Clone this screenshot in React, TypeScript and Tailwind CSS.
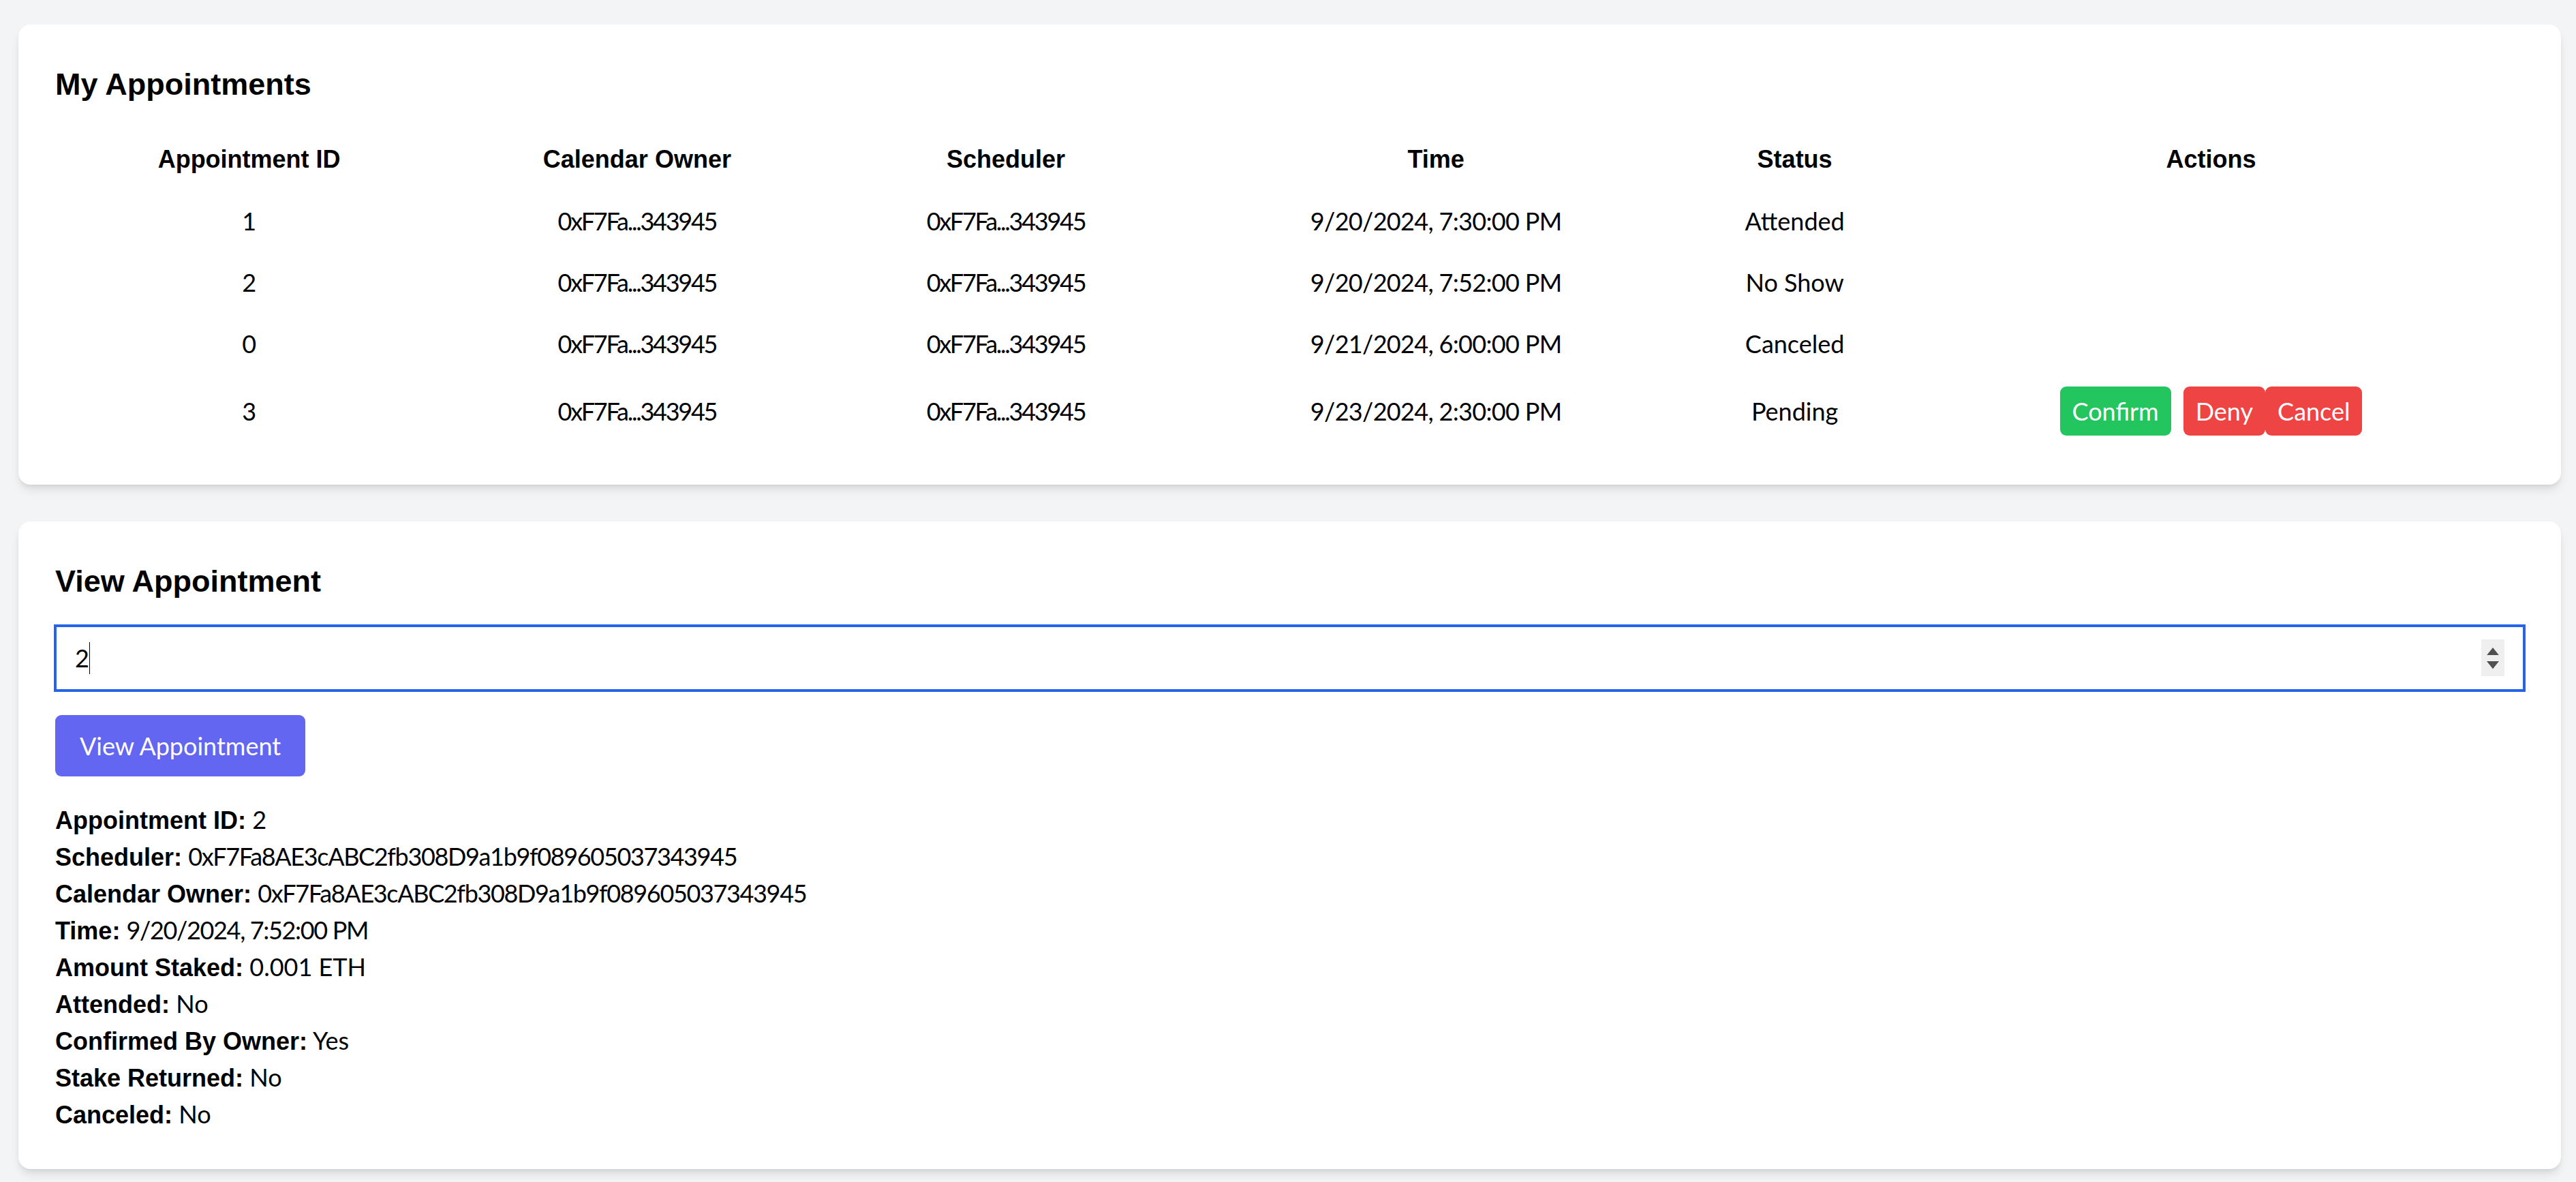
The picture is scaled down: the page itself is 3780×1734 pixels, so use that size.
const appointments = [
  { id: 1, owner: '0xF7Fa...343945', scheduler: '0xF7Fa...343945', time: '9/20/2024, 7:30:00 PM', status: 'Attended' },
  { id: 2, owner: '0xF7Fa...343945', scheduler: '0xF7Fa...343945', time: '9/20/2024, 7:52:00 PM', status: 'No Show' },
  { id: 0, owner: '0xF7Fa...343945', scheduler: '0xF7Fa...343945', time: '9/21/2024, 6:00:00 PM', status: 'Canceled' },
  { id: 3, owner: '0xF7Fa...343945', scheduler: '0xF7Fa...343945', time: '9/23/2024, 2:30:00 PM', status: 'Pending' },
]

const details = [
  ['Appointment ID', '2'],
  ['Scheduler', '0xF7Fa8AE3cABC2fb308D9a1b9f089605037343945'],
  ['Calendar Owner', '0xF7Fa8AE3cABC2fb308D9a1b9f089605037343945'],
  ['Time', '9/20/2024, 7:52:00 PM'],
  ['Amount Staked', '0.001 ETH'],
  ['Attended', 'No'],
  ['Confirmed By Owner', 'Yes'],
  ['Stake Returned', 'No'],
  ['Canceled', 'No'],
]

// bold text uses Arial metrics, regular text Lato
const bold = "font-bold font-['Liberation_Sans',Arial,sans-serif]"

function MyAppointments() {
  return (
    <div className="bg-white rounded-lg shadow-md p-6 mb-6">
      <h2 className={`text-xl mb-[15px] pt-px ${bold}`}>My Appointments</h2>
      <table className="w-full table-fixed text-center">
        <colgroup>
          <col className="w-[253px]" />
          <col className="w-[253px]" />
          <col className="w-[228px]" />
          <col className="w-[333px]" />
          <col className="w-[135px]" />
          <col />
        </colgroup>
        <thead>
          <tr>
            <th className={`py-2 ${bold}`}>Appointment ID</th>
            <th className={`py-2 ${bold}`}>Calendar Owner</th>
            <th className={`py-2 ${bold}`}>Scheduler</th>
            <th className={`py-2 ${bold}`}>Time</th>
            <th className={`py-2 ${bold}`}>Status</th>
            <th className={`py-2 ${bold}`}>Actions</th>
          </tr>
        </thead>
        <tbody>
          {appointments.map((a) => (
            <tr key={a.id}>
              <td className="py-2">{a.id}</td>
              <td className="py-2 tracking-[-1px]">{a.owner}</td>
              <td className="py-2 tracking-[-1px]">{a.scheduler}</td>
              <td className="py-2 tracking-[-0.3px]">{a.time}</td>
              <td className="py-2">{a.status}</td>
              <td className="py-2">
                {a.status === 'Pending' && (
                  <div className="flex justify-center">
                    <button className="bg-[#22c55e] text-white px-2 py-1 rounded mr-2">Confirm</button>
                    <button className="bg-[#ef4444] text-white px-2 py-1 rounded">Deny</button>
                    <button className="bg-[#ef4444] text-white px-2 py-1 rounded">Cancel</button>
                  </div>
                )}
              </td>
            </tr>
          ))}
        </tbody>
      </table>
    </div>
  )
}

function ViewAppointment() {
  return (
    <div className="bg-white rounded-lg shadow-md p-6">
      <h2 className={`text-xl mb-[15px] pt-px ${bold}`}>View Appointment</h2>
      <div className="flex items-center h-[42px] border border-[#2563eb] outline outline-[#2563eb] pl-3 pr-3">
        <span>2</span>
        <span className="w-[0.5px] h-[21px] bg-black" />
        <div className="ml-auto w-[15px] h-6 bg-[#efefef] flex flex-col items-center justify-center gap-[4px]">
          <svg width="8" height="5" viewBox="0 0 8 5">
            <path d="M0 5 L4 0 L8 5 Z" fill="#505050" />
          </svg>
          <svg width="8" height="5" viewBox="0 0 8 5">
            <path d="M0 0 L4 5 L8 0 Z" fill="#505050" />
          </svg>
        </div>
      </div>
      <button className="mt-4 bg-[#6366f1] text-white px-4 py-2 rounded">View Appointment</button>
      <div className="mt-4">
        {details.map(([label, value]) => (
          <p key={label} className="h-6 whitespace-nowrap">
            <strong className={bold}>{label}:</strong>{' '}
            <span className={value.length > 12 ? 'tracking-[-0.6px]' : ''}>{value}</span>
          </p>
        ))}
      </div>
    </div>
  )
}

export default function App() {
  return (
    <div className="min-h-screen w-full bg-[#f3f4f6] overflow-hidden">
      <div className="[zoom:2.25] pt-4 pl-3 pr-[10px] pb-2 text-black font-['Segoe_UI',Lato,sans-serif]">
        <MyAppointments />
        <ViewAppointment />
      </div>
    </div>
  )
}
